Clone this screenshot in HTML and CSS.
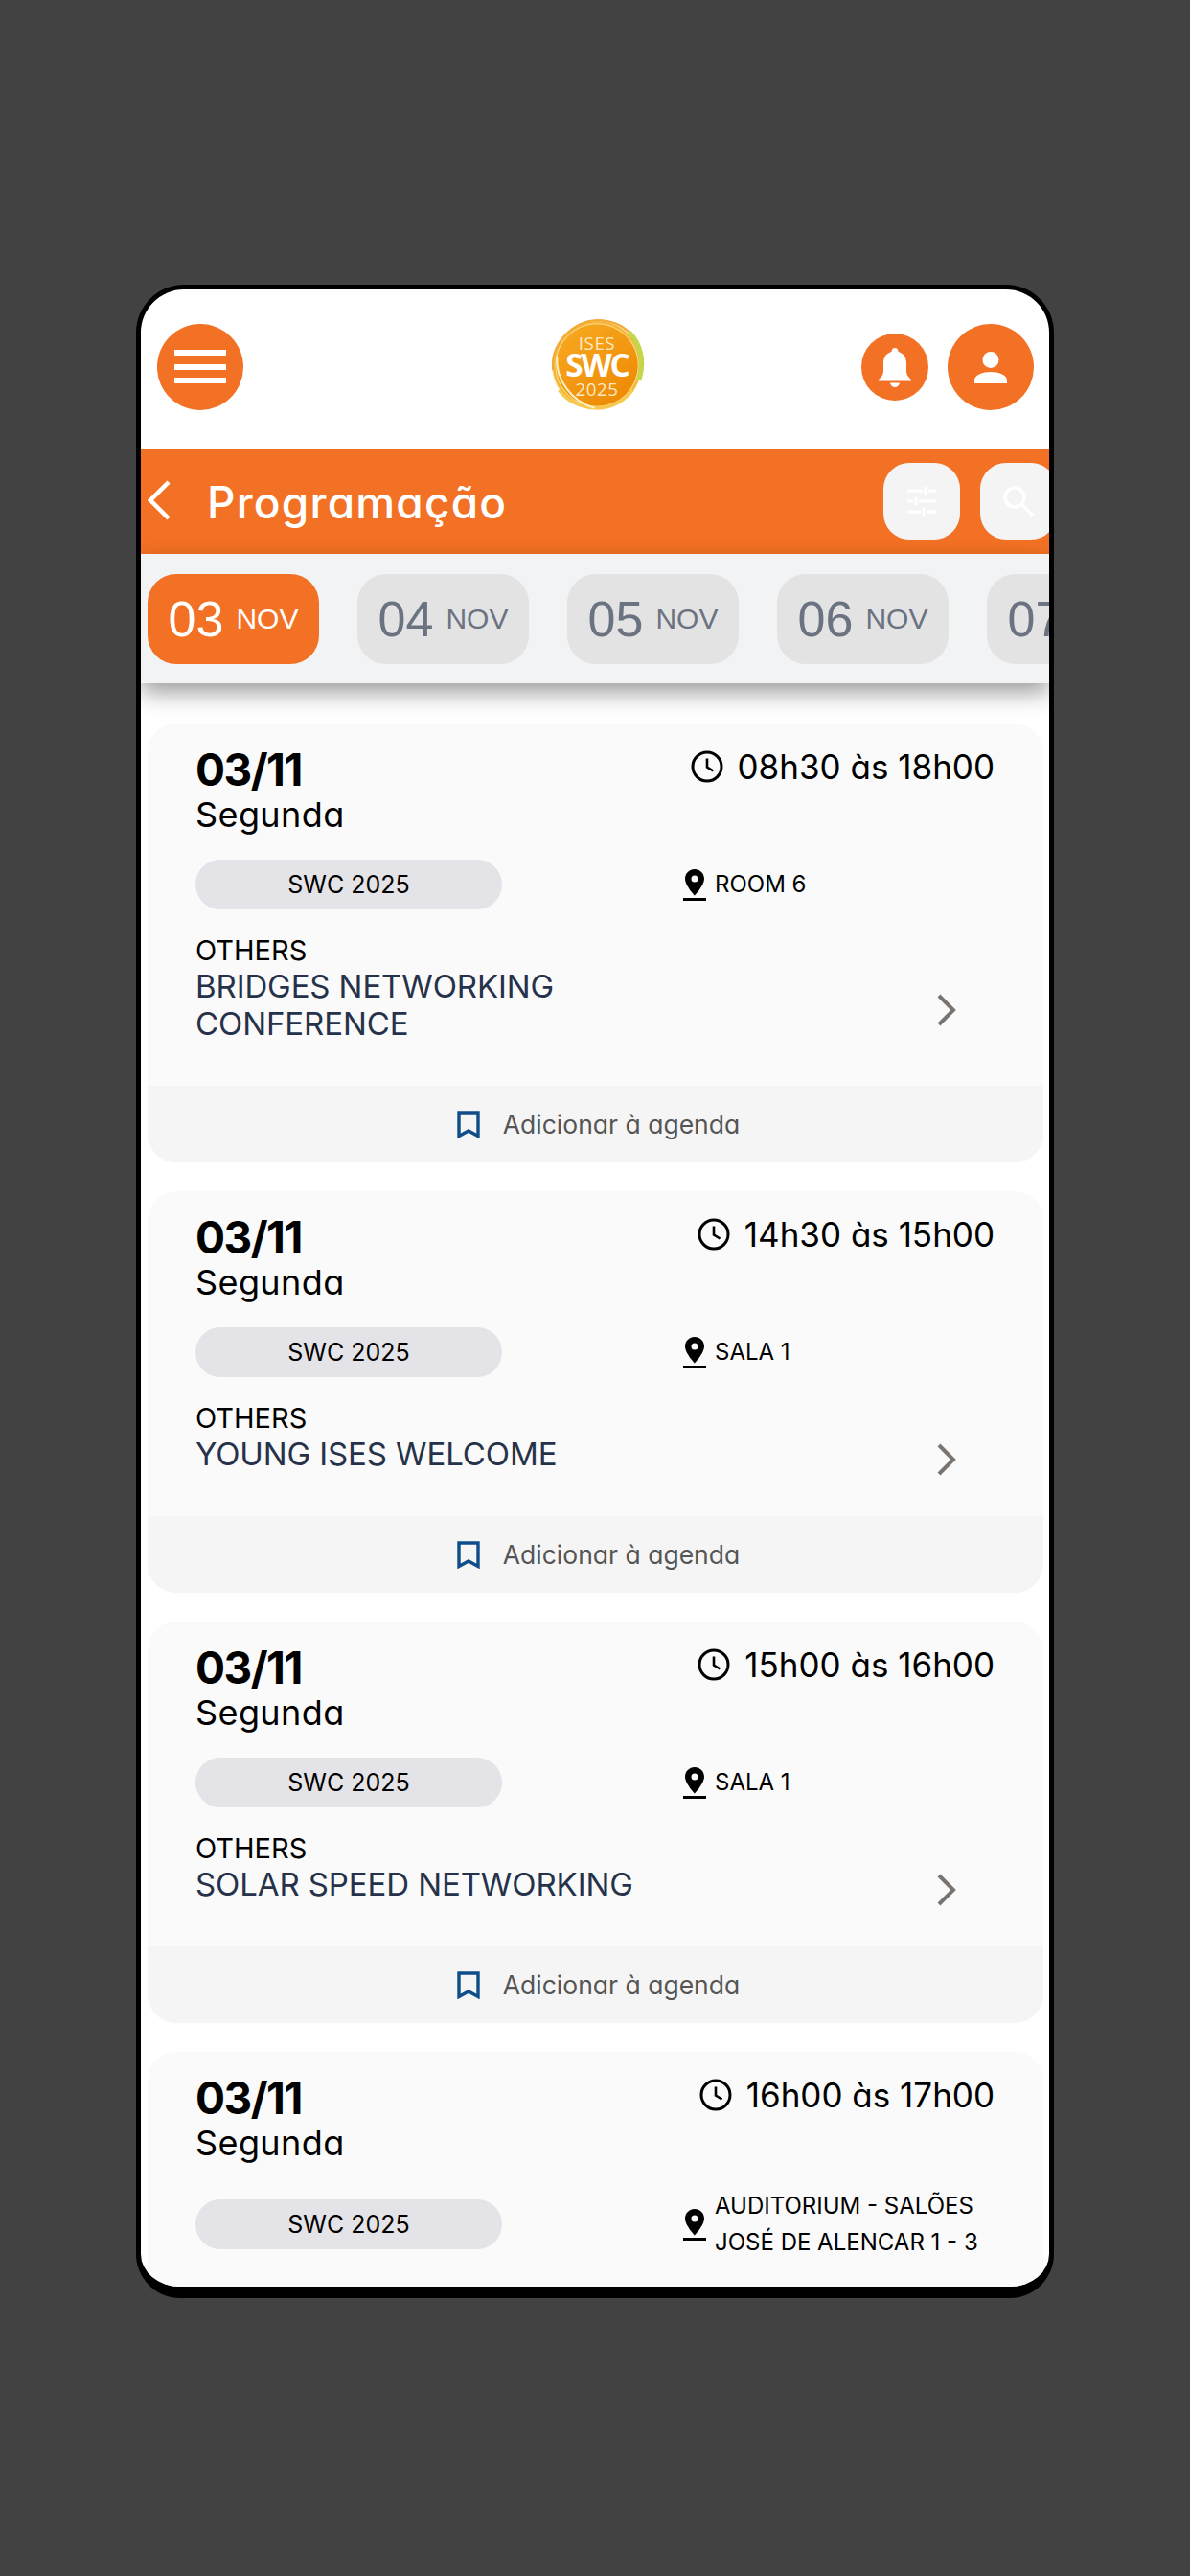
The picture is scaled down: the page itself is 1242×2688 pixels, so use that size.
FILE: index.html
```html
<!DOCTYPE html>
<html lang="pt-BR">

<head>
    <meta charset="UTF-8">
    <meta name="viewport" content="width=device-width, initial-scale=1.0">
    <title>Programação</title>
    <link rel="stylesheet" href="styles.css">
</head>

<body>

    <!-- Shared icons -->
    <svg class="icon-sprite" aria-hidden="true">
        <symbol id="icon-clock" viewBox="0 0 34 34">
            <circle cx="17" cy="17" r="15" fill="none" stroke="currentColor" stroke-width="3" />
            <path d="M17 8.500V17.500L23.500 21.500" fill="none" stroke="currentColor" stroke-width="2.600" />
        </symbol>
        <symbol id="icon-pin" viewBox="0 0 24 33">
            <path fill-rule="evenodd" fill="currentColor" d="M12 0C6.400 0 2 4.400 2 10C2 17 12 27.500 12 27.500S22 17 22 10C22 4.400 17.600 0 12 0ZM12 6.500A3.500 3.500 0 1 1 12 13.500A3.500 3.500 0 1 1 12 6.500Z" />
            <rect x="0" y="30" width="24" height="3" fill="currentColor" />
        </symbol>
        <symbol id="icon-chevron" viewBox="0 0 20 34">
            <path d="M2 2L17 17L2 32" fill="none" stroke="currentColor" stroke-width="4" />
        </symbol>
        <symbol id="icon-bookmark" viewBox="0 0 24 29">
            <path d="M2 2H22V26.500L12 21L2 26.500Z" fill="none" stroke="currentColor" stroke-width="3.400" />
        </symbol>
    </svg>

    <div class="phone">

        <!-- Top header -->
        <header class="top-header">
            <div class="header-left">
                <button class="round-btn round-btn-big" type="button" aria-label="Menu">
                    <svg width="54" height="36" viewBox="0 0 54 36">
                        <rect y="0" width="54" height="6" fill="#fff" />
                        <rect y="15" width="54" height="6" fill="#fff" />
                        <rect y="29" width="54" height="6" fill="#fff" />
                    </svg>
                </button>
            </div>
            <svg class="logo" width="100" height="98" viewBox="0 0 96 94" role="img" aria-label="ISES SWC 2025">
                <defs>
                    <linearGradient id="logo-fill" x1="0" y1="0" x2="0.7" y2="1">
                        <stop offset="0%" stop-color="#f8ab22" />
                        <stop offset="100%" stop-color="#ee8a06" />
                    </linearGradient>
                </defs>
                <circle cx="48" cy="47" r="45" fill="#fbd987" />
                <circle cx="48" cy="47" r="41" fill="url(#logo-fill)" />
                <circle cx="48" cy="47" r="43" fill="none" stroke="#f5b534" stroke-width="2" />
                <path d="M4 52C1 26 24 3 48 2C62 2 76 7 86 20" fill="none" stroke="#f3a93a" stroke-width="2" />
                <path d="M80 14C92 26 96 44 90 62" fill="none" stroke="#c5d64a" stroke-width="5" />
                <path d="M10 72C26 94 62 97 84 72" fill="none" stroke="#f7c94f" stroke-width="3" />
                <path d="M8 38C6 60 22 84 46 90" fill="none" stroke="#fdf0c0" stroke-width="2" />
                <text class="logo-small" x="48" y="32" text-anchor="middle">ISES</text>
                <text class="logo-big" x="48" y="59" text-anchor="middle">SWC</text>
                <text class="logo-small" x="48" y="78" text-anchor="middle">2025</text>
            </svg>
            <div class="header-right">
                <button class="round-btn round-btn-small" type="button" aria-label="Notificações">
                    <svg width="34" height="41" viewBox="0 0 34 41">
                        <path fill="#fff" d="M17 0C19 0 20.500 1.500 20.500 4C26 5.500 29 10 29 16V24C29 28 31 30.500 34 33V34.500H0V33C3 30.500 5 28 5 24V16C5 10 8 5.500 13.500 4C13.500 1.500 15 0 17 0ZM12 36.500H22C21.500 39 19.500 41 17 41C14.500 41 12.500 39 12 36.500Z" />
                    </svg>
                </button>
                <button class="round-btn round-btn-big" type="button" aria-label="Perfil">
                    <svg width="34" height="33" viewBox="0 0 34 33">
                        <circle cx="17" cy="8.500" r="8.500" fill="#fff" />
                        <path fill="#fff" d="M0 33V30C0 24 9 21 17 21S34 24 34 30V33Z" />
                    </svg>
                </button>
            </div>
        </header>

        <!-- Title bar -->
        <div class="title-bar">
            <svg class="back-icon" width="26" height="42" viewBox="0 0 26 42">
                <path d="M23 2L4 21L23 40" fill="none" stroke="#fff" stroke-width="4.500" />
            </svg>
            <h1 class="page-title">Programação</h1>
            <div class="title-actions">
                <button class="square-btn" type="button" aria-label="Filtros">
                    <svg width="32" height="32" viewBox="0 0 32 32" stroke="#fff" stroke-width="3.200" fill="none">
                        <path d="M1 5H17M23 5H31M20 1V9" />
                        <path d="M1 16H7M13 16H31M10 12V20" />
                        <path d="M1 27H15M21 27H31M18 23V31" />
                    </svg>
                </button>
                <button class="square-btn" type="button" aria-label="Buscar">
                    <svg width="32" height="32" viewBox="0 0 32 32" stroke="#fff" fill="none">
                        <circle cx="12" cy="12" r="10" stroke-width="3.400" />
                        <path d="M19 19L31 31" stroke-width="3.400" />
                    </svg>
                </button>
            </div>
        </div>

        <!-- Day selector -->
        <nav class="day-strip">
            <div class="day-chip active"><span class="day-num">03</span> <span class="day-month">NOV</span></div>
            <div class="day-chip"><span class="day-num">04</span> <span class="day-month">NOV</span></div>
            <div class="day-chip"><span class="day-num">05</span> <span class="day-month">NOV</span></div>
            <div class="day-chip"><span class="day-num">06</span> <span class="day-month">NOV</span></div>
            <div class="day-chip"><span class="day-num">07</span> <span class="day-month">NOV</span></div>
        </nav>

        <!-- Sessions -->
        <main class="session-list">

            <article class="card">
                <div class="card-top">
                    <div>
                        <div class="card-date">03/11</div>
                        <div class="card-weekday">Segunda</div>
                    </div>
                    <div class="card-time">
                        <svg class="clock-icon"><use href="#icon-clock" /></svg>
                        <span>08h30 às 18h00</span>
                    </div>
                </div>
                <div class="card-meta">
                    <span class="event-pill">SWC 2025</span>
                    <div class="card-place">
                        <svg class="pin-icon"><use href="#icon-pin" /></svg>
                        <span>ROOM 6</span>
                    </div>
                </div>
                <div class="card-session">
                    <div class="session-text">
                        <div class="session-type">OTHERS</div>
                        <div class="session-name">BRIDGES NETWORKING<br>CONFERENCE</div>
                    </div>
                    <svg class="chevron-icon"><use href="#icon-chevron" /></svg>
                </div>
                <div class="card-footer">
                    <svg class="bookmark-icon"><use href="#icon-bookmark" /></svg>
                    <span>Adicionar à agenda</span>
                </div>
            </article>

            <article class="card">
                <div class="card-top">
                    <div>
                        <div class="card-date">03/11</div>
                        <div class="card-weekday">Segunda</div>
                    </div>
                    <div class="card-time">
                        <svg class="clock-icon"><use href="#icon-clock" /></svg>
                        <span>14h30 às 15h00</span>
                    </div>
                </div>
                <div class="card-meta">
                    <span class="event-pill">SWC 2025</span>
                    <div class="card-place">
                        <svg class="pin-icon"><use href="#icon-pin" /></svg>
                        <span>SALA 1</span>
                    </div>
                </div>
                <div class="card-session">
                    <div class="session-text">
                        <div class="session-type">OTHERS</div>
                        <div class="session-name">YOUNG ISES WELCOME</div>
                    </div>
                    <svg class="chevron-icon"><use href="#icon-chevron" /></svg>
                </div>
                <div class="card-footer">
                    <svg class="bookmark-icon"><use href="#icon-bookmark" /></svg>
                    <span>Adicionar à agenda</span>
                </div>
            </article>

            <article class="card">
                <div class="card-top">
                    <div>
                        <div class="card-date">03/11</div>
                        <div class="card-weekday">Segunda</div>
                    </div>
                    <div class="card-time">
                        <svg class="clock-icon"><use href="#icon-clock" /></svg>
                        <span>15h00 às 16h00</span>
                    </div>
                </div>
                <div class="card-meta">
                    <span class="event-pill">SWC 2025</span>
                    <div class="card-place">
                        <svg class="pin-icon"><use href="#icon-pin" /></svg>
                        <span>SALA 1</span>
                    </div>
                </div>
                <div class="card-session">
                    <div class="session-text">
                        <div class="session-type">OTHERS</div>
                        <div class="session-name">SOLAR SPEED NETWORKING</div>
                    </div>
                    <svg class="chevron-icon"><use href="#icon-chevron" /></svg>
                </div>
                <div class="card-footer">
                    <svg class="bookmark-icon"><use href="#icon-bookmark" /></svg>
                    <span>Adicionar à agenda</span>
                </div>
            </article>

            <article class="card card-cut">
                <div class="card-top">
                    <div>
                        <div class="card-date">03/11</div>
                        <div class="card-weekday">Segunda</div>
                    </div>
                    <div class="card-time">
                        <svg class="clock-icon"><use href="#icon-clock" /></svg>
                        <span>16h00 às 17h00</span>
                    </div>
                </div>
                <div class="card-meta">
                    <span class="event-pill">SWC 2025</span>
                    <div class="card-place">
                        <svg class="pin-icon"><use href="#icon-pin" /></svg>
                        <span>AUDITORIUM - SALÕES<br>JOSÉ DE ALENCAR 1 - 3</span>
                    </div>
                </div>
            </article>

        </main>
    </div>

</body>

</html>
```

FILE: styles.css
```css
* {
    box-sizing: border-box;
    font-family: 'Inter', 'Liberation Sans', sans-serif;
    font-feature-settings: "cv11";
}

body {
    margin: 0;
    padding: 297px 0 0 142px;
    background: #424242;
    height: 2688px;
    overflow: hidden;
}

.icon-sprite {
    display: none;
}

button {
    border: none;
    padding: 0;
    cursor: pointer;
}

.phone {
    width: 958px;
    height: 2101px;
    background: #fff;
    border: solid #000;
    border-width: 5px 5px 12px;
    border-radius: 50px 50px 46px 46px;
    overflow: hidden;
    display: flex;
    flex-direction: column;
}

/* Top header */
.top-header {
    flex: none;
    height: 166px;
    padding: 0 16px 4px 17px;
    display: grid;
    grid-template-columns: 1fr auto 1fr;
    align-items: center;
}

.header-right {
    display: flex;
    justify-content: flex-end;
    align-items: center;
    gap: 20px;
}

.round-btn {
    background: #f37124;
    border-radius: 50%;
    display: flex;
    align-items: center;
    justify-content: center;
}

.round-btn-big {
    width: 90px;
    height: 90px;
}

.round-btn-small {
    width: 70px;
    height: 70px;
}

.logo {
    display: block;
    margin: 0 0 4px 2px;
}

.logo-small {
    font-family: 'Open Sans', sans-serif;
    font-size: 18px;
    letter-spacing: 0.5px;
    fill: #fde9c0;
}

.logo-big {
    font-family: 'Open Sans', sans-serif;
    font-size: 32px;
    font-weight: 700;
    letter-spacing: -2px;
    fill: #fff;
}

/* Title bar */
.title-bar {
    flex: none;
    height: 110px;
    background: #f37124;
    padding-left: 6px;
    display: flex;
    align-items: center;
}

.back-icon {
    flex: none;
    margin-top: -3px;
}

.page-title {
    flex: 1;
    margin: 2px 0 0 37px;
    font-size: 46px;
    font-weight: 500;
    letter-spacing: 1.200px;
    color: #fff;
}

.title-actions {
    flex: none;
    margin-right: -8px;
    display: flex;
    gap: 21px;
}

.square-btn {
    width: 80px;
    height: 80px;
    border-radius: 27px;
    background: #f4f4f4;
    display: flex;
    align-items: center;
    justify-content: center;
}

/* Day selector */
.day-strip {
    flex: none;
    position: relative;
    z-index: 2;
    height: 135px;
    padding: 21px 0 0 7px;
    background: #f2f3f5;
    box-shadow: 0 10px 22px rgba(0, 0, 0, 0.38);
    display: flex;
    gap: 40px;
    overflow: hidden;
}

.day-chip {
    flex: none;
    width: 179px;
    height: 94px;
    border-radius: 30px;
    background: #e3e3e4;
    color: #6b7280;
    display: flex;
    align-items: center;
    justify-content: center;
    gap: 13px;
}

.day-chip.active {
    background: #f37124;
    color: #fff;
}

.day-num {
    font-family: 'Liberation Sans', sans-serif;
    font-size: 52px;
    line-height: 58px;
}

.day-month {
    font-family: 'Liberation Sans', sans-serif;
    font-size: 30px;
}

/* Session cards */
.session-list {
    flex: 1;
    min-height: 0;
    padding: 42px 6px 0 7px;
    display: flex;
    flex-direction: column;
    gap: 30px;
}

.card {
    flex: none;
    background: #fafafa;
    border-radius: 30px;
    overflow: hidden;
}

/* the last card runs on past the bottom of the phone */
.card-cut {
    min-height: 400px;
}

.card-top {
    padding: 23px 51px 0 50px;
    display: flex;
    justify-content: space-between;
    align-items: flex-start;
}

.card-date {
    font-size: 46px;
    line-height: 50px;
    font-weight: 700;
    letter-spacing: -1.5px;
    color: #000;
}

.card-weekday {
    font-size: 36px;
    line-height: 45px;
    letter-spacing: 0.4px;
    color: #000;
}

.card-time {
    display: flex;
    align-items: center;
    gap: 15px;
    font-size: 35px;
    line-height: 44px;
    color: #000;
}

.clock-icon {
    width: 34px;
    height: 34px;
    color: #000;
}

.card-meta {
    margin-top: 24px;
    padding-left: 50px;
    display: flex;
    align-items: center;
    gap: 189px;
}

.event-pill {
    flex: none;
    width: 320px;
    height: 52px;
    border-radius: 26px;
    background: #e3e3e8;
    color: #000;
    font-size: 25px;
    line-height: 52px;
    text-align: center;
}

.card-place {
    display: flex;
    align-items: center;
    gap: 9px;
    font-size: 24px;
    line-height: 38px;
    color: #000;
}

.pin-icon {
    flex: none;
    width: 24px;
    height: 33px;
    color: #000;
}

.card-session {
    margin-top: 26px;
    padding: 0 91px 0 50px;
    display: flex;
    justify-content: space-between;
    align-items: center;
}

.session-text {
    padding-bottom: 45px;
}

.session-type {
    font-size: 29px;
    line-height: 34px;
    color: #000;
}

.session-name {
    margin-top: 1px;
    font-size: 33px;
    line-height: 39px;
    letter-spacing: -0.1px;
    color: #25324a;
}

.chevron-icon {
    flex: none;
    width: 20px;
    height: 34px;
    color: #7a7471;
}

.card-footer {
    height: 80px;
    padding-left: 6px;
    background: #f5f5f5;
    display: flex;
    align-items: center;
    justify-content: center;
    gap: 24px;
    font-size: 26.500px;
    color: #555;
}

.bookmark-icon {
    flex: none;
    width: 24px;
    height: 29px;
    color: #0f4c8a;
}
```
